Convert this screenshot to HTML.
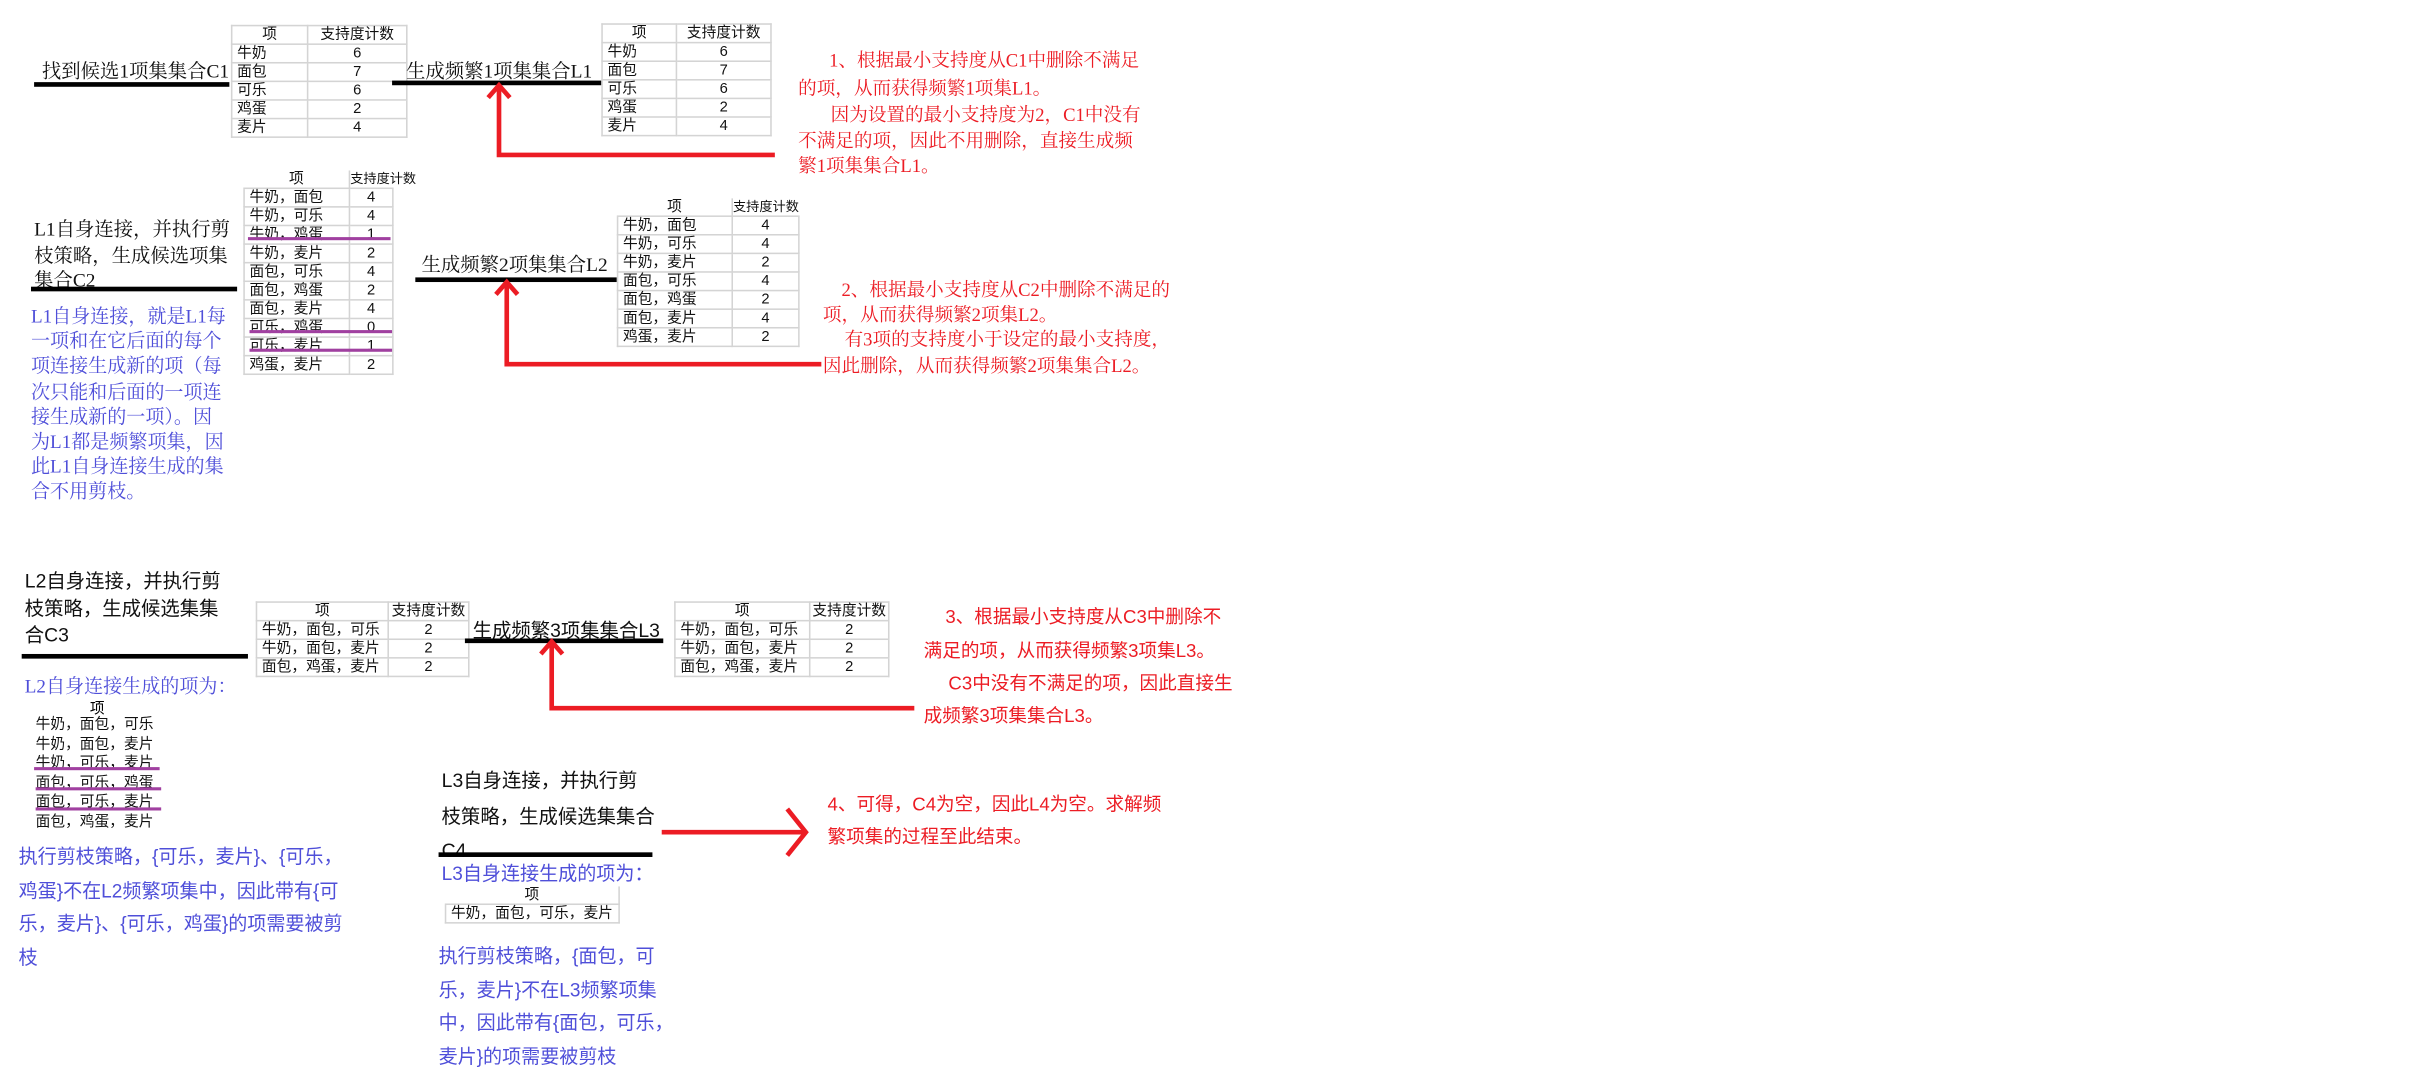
<!DOCTYPE html>
<html><head><meta charset="utf-8">
<style>
html,body{margin:0;padding:0;background:#fff;}
body{width:2430px;height:1076px;overflow:hidden;position:relative;}
#w{position:absolute;left:0;top:0;width:1568px;height:694px;transform:scale(1.5497);transform-origin:0 0;}
.a{position:absolute;white-space:nowrap;}
.se{font-family:"Liberation Serif","Noto Serif CJK SC",serif;}
.sa{font-family:"Liberation Sans","Noto Sans CJK SC",sans-serif;}
.k{color:#111;font-size:12.5px;}
.r{color:#ec1c24;font-size:12px;}
.b{color:#4f4fd9;font-size:12.3px;}
.bar{position:absolute;height:3px;background:#000;}
.pl{position:absolute;height:2px;background:#a040a0;}
table{position:absolute;border-collapse:collapse;font-family:"Liberation Sans","Noto Sans CJK SC",sans-serif;font-size:9.5px;color:#111;table-layout:fixed;}
td{border:1px solid #d4d4d4;padding:0 0 0 3px;height:11px;line-height:11px;white-space:nowrap;overflow:visible;}
td.c{text-align:center;padding:0;}
td.h{font-size:8.5px;text-align:left;padding:0;}
</style></head><body><div id="w">

<!-- Row 1 -->
<div class="a se k" style="left:27px;top:36px;">找到候选1项集集合C1</div>
<div class="bar" style="left:22px;top:53px;width:126px;"></div>
<table style="left:149px;top:16px;width:113px;">
<col style="width:49px"><col style="width:64px">
<tr><td class="c">项</td><td class="c">支持度计数</td></tr>
<tr><td>牛奶</td><td class="c">6</td></tr>
<tr><td>面包</td><td class="c">7</td></tr>
<tr><td>可乐</td><td class="c">6</td></tr>
<tr><td>鸡蛋</td><td class="c">2</td></tr>
<tr><td>麦片</td><td class="c">4</td></tr>
</table>
<div class="a se k" style="left:262px;top:36px;">生成频繁1项集集合L1</div>
<div class="bar" style="left:253px;top:52px;width:135px;"></div>
<table style="left:388px;top:15px;width:109px;">
<col style="width:48px"><col style="width:61px">
<tr><td class="c">项</td><td class="c">支持度计数</td></tr>
<tr><td>牛奶</td><td class="c">6</td></tr>
<tr><td>面包</td><td class="c">7</td></tr>
<tr><td>可乐</td><td class="c">6</td></tr>
<tr><td>鸡蛋</td><td class="c">2</td></tr>
<tr><td>麦片</td><td class="c">4</td></tr>
</table>
<div class="a se r" style="left:535px;top:30px;">1、根据最小支持度从C1中删除不满足</div>
<div class="a se r" style="left:515px;top:48px;">的项，从而获得频繁1项集L1。</div>
<div class="a se r" style="left:536px;top:65px;">因为设置的最小支持度为2，C1中没有</div>
<div class="a se r" style="left:515px;top:82px;">不满足的项，因此不用删除，直接生成频</div>
<div class="a se r" style="left:515px;top:98px;">繁1项集集合L1。</div>

<!-- Row 2 -->
<table style="left:157px;top:110px;width:96px;">
<col style="width:68px"><col style="width:28px">
<tr><td class="c" style="border-top:none;border-left:none;">项</td><td class="h" style="border-top:none;border-right:none;">支持度计数</td></tr>
<tr><td>牛奶，面包</td><td class="c">4</td></tr>
<tr><td>牛奶，可乐</td><td class="c">4</td></tr>
<tr><td>牛奶，鸡蛋</td><td class="c">1</td></tr>
<tr><td>牛奶，麦片</td><td class="c">2</td></tr>
<tr><td>面包，可乐</td><td class="c">4</td></tr>
<tr><td>面包，鸡蛋</td><td class="c">2</td></tr>
<tr><td>面包，麦片</td><td class="c">4</td></tr>
<tr><td>可乐，鸡蛋</td><td class="c">0</td></tr>
<tr><td>可乐，麦片</td><td class="c">1</td></tr>
<tr><td>鸡蛋，麦片</td><td class="c">2</td></tr>
</table>
<div class="pl" style="left:160px;top:153px;width:92px;"></div>
<div class="pl" style="left:161px;top:213px;width:92px;"></div>
<div class="pl" style="left:161px;top:225px;width:92px;"></div>
<div class="a se k" style="left:22px;top:138px;">L1自身连接，并执行剪</div>
<div class="a se k" style="left:22px;top:155px;">枝策略，生成候选项集</div>
<div class="a se k" style="left:22px;top:171px;">集合C2</div>
<div class="bar" style="left:20px;top:185px;width:133px;"></div>
<div class="a se b" style="left:20px;top:196px;line-height:16.2px;">L1自身连接，就是L1每<br>一项和在它后面的每个<br>项连接生成新的项（每<br>次只能和后面的一项连<br>接生成新的一项）。因<br>为L1都是频繁项集，因<br>此L1自身连接生成的集<br>合不用剪枝。</div>
<div class="a se k" style="left:272px;top:161px;">生成频繁2项集集合L2</div>
<div class="bar" style="left:268px;top:179px;width:130px;"></div>
<table style="left:398px;top:128px;width:117px;">
<col style="width:74px"><col style="width:43px">
<tr><td class="c" style="border-top:none;border-left:none;">项</td><td class="h" style="border-top:none;border-right:none;">支持度计数</td></tr>
<tr><td>牛奶，面包</td><td class="c">4</td></tr>
<tr><td>牛奶，可乐</td><td class="c">4</td></tr>
<tr><td>牛奶，麦片</td><td class="c">2</td></tr>
<tr><td>面包，可乐</td><td class="c">4</td></tr>
<tr><td>面包，鸡蛋</td><td class="c">2</td></tr>
<tr><td>面包，麦片</td><td class="c">4</td></tr>
<tr><td>鸡蛋，麦片</td><td class="c">2</td></tr>
</table>
<div class="a se r" style="left:543px;top:178px;">2、根据最小支持度从C2中删除不满足的</div>
<div class="a se r" style="left:531px;top:194px;">项，从而获得频繁2项集L2。</div>
<div class="a se r" style="left:545px;top:210px;">有3项的支持度小于设定的最小支持度，</div>
<div class="a se r" style="left:531px;top:227px;">因此删除，从而获得频繁2项集集合L2。</div>

<!-- Row 3 -->
<div class="a sa k" style="left:16px;top:367px;line-height:17.5px;">L2自身连接，并执行剪<br>枝策略，生成候选集集<br>合C3</div>
<div class="bar" style="left:14px;top:422px;width:146px;"></div>
<div class="a se b" style="left:16px;top:433px;">L2自身连接生成的项为：</div>
<div class="a sa" style="left:58px;top:449px;font-size:9.5px;">项</div>
<div class="a sa" style="left:23px;top:462px;font-size:9.5px;line-height:12.5px;color:#111;">牛奶，面包，可乐<br>牛奶，面包，麦片<br>牛奶，可乐，麦片<br>面包，可乐，鸡蛋<br>面包，可乐，麦片<br>面包，鸡蛋，麦片</div>
<div class="pl" style="left:22px;top:495px;width:81px;"></div>
<div class="pl" style="left:23px;top:508px;width:81px;"></div>
<div class="pl" style="left:23px;top:521px;width:81px;"></div>
<table style="left:165px;top:388px;width:137px;">
<col style="width:85px"><col style="width:52px">
<tr><td class="c">项</td><td class="c">支持度计数</td></tr>
<tr><td>牛奶，面包，可乐</td><td class="c">2</td></tr>
<tr><td>牛奶，面包，麦片</td><td class="c">2</td></tr>
<tr><td>面包，鸡蛋，麦片</td><td class="c">2</td></tr>
</table>
<div class="a sa k" style="left:305px;top:396px;">生成频繁3项集集合L3</div>
<div class="bar" style="left:300px;top:412px;width:128px;"></div>
<table style="left:435px;top:388px;width:138px;">
<col style="width:87px"><col style="width:51px">
<tr><td class="c">项</td><td class="c">支持度计数</td></tr>
<tr><td>牛奶，面包，可乐</td><td class="c">2</td></tr>
<tr><td>牛奶，面包，麦片</td><td class="c">2</td></tr>
<tr><td>面包，鸡蛋，麦片</td><td class="c">2</td></tr>
</table>
<div class="a sa r" style="left:610px;top:389px;">3、根据最小支持度从C3中删除不</div>
<div class="a sa r" style="left:596px;top:411px;">满足的项，从而获得频繁3项集L3。</div>
<div class="a sa r" style="left:612px;top:432px;">C3中没有不满足的项，因此直接生</div>
<div class="a sa r" style="left:596px;top:453px;">成频繁3项集集合L3。</div>

<div class="a sa b" style="left:12px;top:543px;line-height:21.5px;">执行剪枝策略，{可乐，麦片}、{可乐，<br>鸡蛋}不在L2频繁项集中，因此带有{可<br>乐，麦片}、{可乐，鸡蛋}的项需要被剪<br>枝</div>

<div class="a sa k" style="left:285px;top:493px;line-height:22.5px;">L3自身连接，并执行剪<br>枝策略，生成候选集集合<br>C4</div>
<div class="bar" style="left:283px;top:550px;width:138px;"></div>
<div class="a sa b" style="left:285px;top:554px;">L3自身连接生成的项为：</div>
<table style="left:287px;top:572px;width:112px;">
<col style="width:112px">
<tr><td class="c" style="border-top:none;border-left:none;">项</td></tr>
<tr><td>牛奶，面包，可乐，麦片</td></tr>
</table>
<div class="a sa b" style="left:283px;top:607px;line-height:21.7px;">执行剪枝策略，{面包，可<br>乐，麦片}不在L3频繁项集<br>中，因此带有{面包，可乐，<br>麦片}的项需要被剪枝</div>

<div class="a sa r" style="left:534px;top:510px;">4、可得，C4为空，因此L4为空。求解频</div>
<div class="a sa r" style="left:534px;top:531px;">繁项集的过程至此结束。</div>

<svg class="a" style="left:0;top:0;" width="1568" height="694" viewBox="0 0 1568 694">
<g fill="none" stroke="#ec1c24" stroke-width="3">
<polyline points="322,57 322,100 500,100"/>
<polyline points="315,63 322,55 329,63"/>
<polyline points="327,184 327,235 530,235"/>
<polyline points="320,190 327,182 334,190"/>
<polyline points="356,416 356,457 590,457"/>
<polyline points="349,422 356,414 363,422"/>
<polyline points="427,537 519,537"/>
<polyline points="508,522 520,537 508,552"/>
</g>
</svg>
</div></body></html>
